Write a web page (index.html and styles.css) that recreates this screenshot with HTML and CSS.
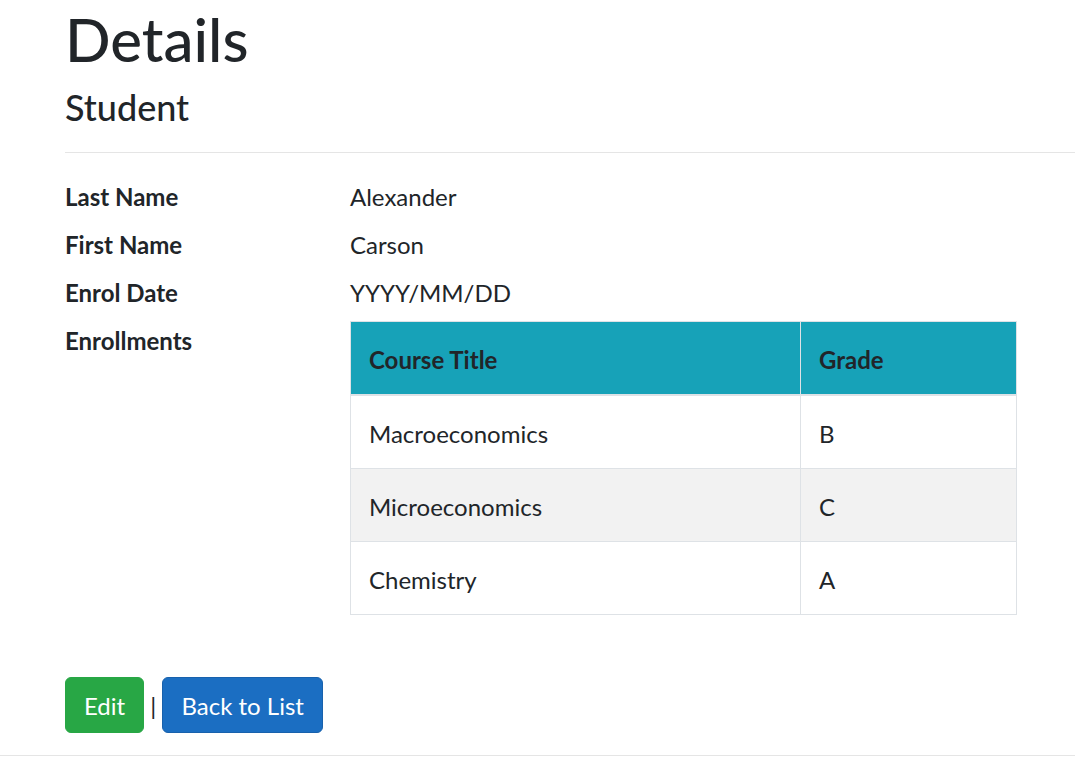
FILE: index.html
```html
<!DOCTYPE html>
<html lang="en">
<head>
<meta charset="utf-8">
<title>Details</title>
<link rel="stylesheet" href="styles.css">
</head>
<body>
<div class="container">
  <h1 class="title">Details</h1>
  <div>
    <h4 class="subtitle">Student</h4>
    <hr class="rule">
    <dl class="details">
      <dt>Last Name</dt>
      <dd>Alexander</dd>
      <dt>First Name</dt>
      <dd>Carson</dd>
      <dt>Enrol Date</dt>
      <dd>YYYY/MM/DD</dd>
      <dt>Enrollments</dt>
      <dd>
        <table class="enrol-table">
          <thead>
            <tr><th class="col-title">Course Title</th><th class="col-grade">Grade</th></tr>
          </thead>
          <tbody>
            <tr><td>Macroeconomics</td><td>B</td></tr>
            <tr><td>Microeconomics</td><td>C</td></tr>
            <tr><td>Chemistry</td><td>A</td></tr>
          </tbody>
        </table>
      </dd>
    </dl>
  </div>
  <div class="actions">
    <a class="btn btn-success" href="#">Edit</a> | <a class="btn btn-primary" href="#">Back to List</a>
  </div>
</div>
<footer class="footer"></footer>
</body>
</html>
```

FILE: styles.css
```css
html, body {
  margin: 0;
  padding: 0;
  background: #fff;
}

body {
  font-family: Lato, "Open Sans", "Liberation Sans", sans-serif;
  font-size: 24px;
  line-height: 36px;
  color: #212529;
}

.container {
  padding-top: 3px;
  padding-left: 65px;
}

.title {
  margin: 0 0 11px;
  font-size: 60px;
  line-height: 72px;
  font-weight: 500;
}

.subtitle {
  margin: 0;
  font-size: 36px;
  line-height: 43px;
  font-weight: 500;
}

.rule {
  margin: 23px 0 26px;
  border: 0;
  border-top: 1px solid rgba(0, 0, 0, 0.1);
}

.details {
  display: grid;
  grid-template-columns: 285px 1fr;
  margin: 0 0 26px;
}

.details dt {
  font-weight: 700;
  margin: 0 0 12px;
}

.details dd {
  margin: 0 0 12px;
}

.enrol-table {
  border-collapse: collapse;
  width: 667px;
  margin: -2px 0 24px;
}

.enrol-table th,
.enrol-table td {
  padding: 20px 18px 16px;
  border: 1px solid #dee2e6;
  text-align: left;
  vertical-align: top;
}

.enrol-table thead th {
  background: #17a2b8;
  font-weight: 700;
  border-bottom: 2px solid #dee2e6;
}

.enrol-table .col-title {
  width: 413px;
}

.enrol-table tbody tr:nth-child(even) {
  background: #f2f2f2;
}

.btn {
  display: inline-block;
  padding: 10px 18px 8px;
  border: 1px solid transparent;
  border-radius: 6px;
  color: #fff;
  text-decoration: none;
  line-height: 36px;
}

.btn-success {
  background: #28a745;
  border-color: #28a745;
}

.btn-primary {
  background: #1b6ec2;
  border-color: #1861ac;
}

.footer {
  margin-top: 22px;
  border-top: 1px solid #e5e5e5;
  height: 0;
}
```
